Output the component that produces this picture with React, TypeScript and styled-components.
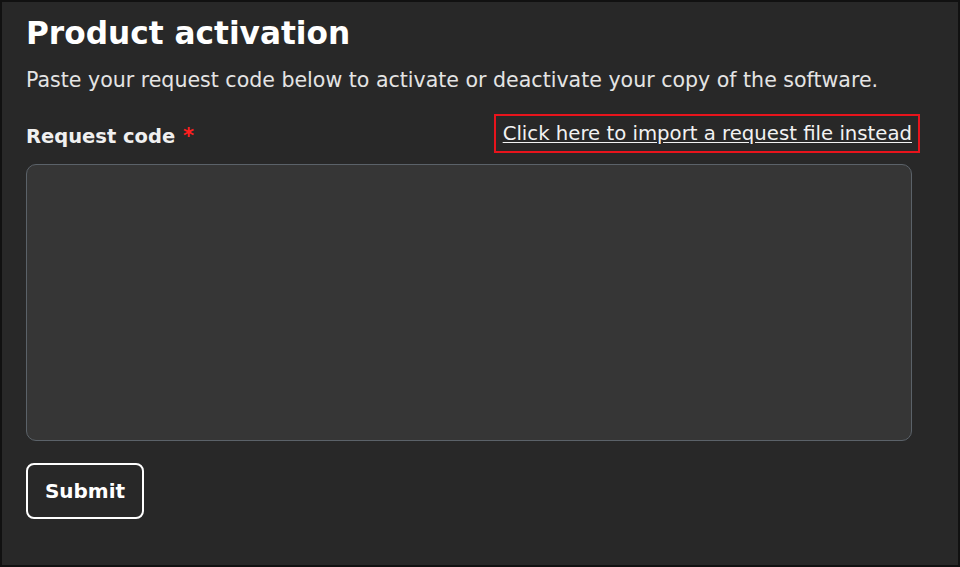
import styled, { createGlobalStyle } from 'styled-components';

const GlobalStyle = createGlobalStyle`
  html, body {
    margin: 0;
    padding: 0;
    background: #282828;
  }
  * {
    box-sizing: border-box;
  }
`;

export default function App() {
  return (
    <>
      <GlobalStyle />
      <Frame>
        <Title>Product activation</Title>
        <Intro>Paste your request code below to activate or deactivate your copy of the software.</Intro>
        <LabelRow>
          <Label htmlFor='request-code'>
            Request code <Required>*</Required>
          </Label>
          <Highlight>
            <ImportLink href='#'>Click here to import a request file instead</ImportLink>
          </Highlight>
        </LabelRow>
        <CodeArea id='request-code' />
        <SubmitButton type='button'>Submit</SubmitButton>
      </Frame>
    </>
  );
}

const Frame = styled.main`
  width: 960px;
  height: 567px;
  border: 2px solid #111111;
  background-color: #282828;
  padding: 11px 46px 0 24px;
  font-family: 'DejaVu Sans', 'Open Sans', sans-serif;
  color: #f2f2f2;
  display: flex;
  flex-direction: column;
  align-items: flex-start;
`;

const Title = styled.h1`
  margin: 0;
  font-size: 31.2px;
  font-weight: 700;
  line-height: 40px;
  color: #ffffff;
`;

const Intro = styled.p`
  margin: 13px 0 0;
  font-size: 20.55px;
  line-height: 28px;
  color: #e4e4e4;
`;

const LabelRow = styled.div`
  width: 100%;
  margin-top: 20px;
  display: flex;
  justify-content: space-between;
  align-items: center;
`;

const Label = styled.label`
  margin-top: 4px;
  font-size: 19.5px;
  font-weight: 700;
  color: #f0f0f0;
`;

const Required = styled.span`
  color: #ff1f1f;
  margin-left: 1px;
  font-size: 21px;
`;

const Highlight = styled.div`
  border: 2px solid #e8141c;
  padding: 4px 6px 4px 7px;
  margin-right: -8px;
`;

const ImportLink = styled.a`
  font-size: 19.7px;
  line-height: 27px;
  color: #f2f2f2;
  text-decoration: underline;
  text-underline-offset: 2px;
  display: block;
  white-space: nowrap;
`;

const CodeArea = styled.textarea`
  width: 100%;
  height: 277px;
  margin-top: 11px;
  background-color: #363636;
  border: 1px solid #5b6269;
  border-radius: 10px;
  resize: none;
  color: #f2f2f2;
  font: inherit;
  outline: none;
`;

const SubmitButton = styled.button`
  margin-top: 22px;
  width: 118px;
  height: 56px;
  background: transparent;
  border: 2px solid #ffffff;
  border-radius: 8px;
  color: #ffffff;
  font-family: inherit;
  font-size: 20px;
  font-weight: 700;
  cursor: pointer;
`;
